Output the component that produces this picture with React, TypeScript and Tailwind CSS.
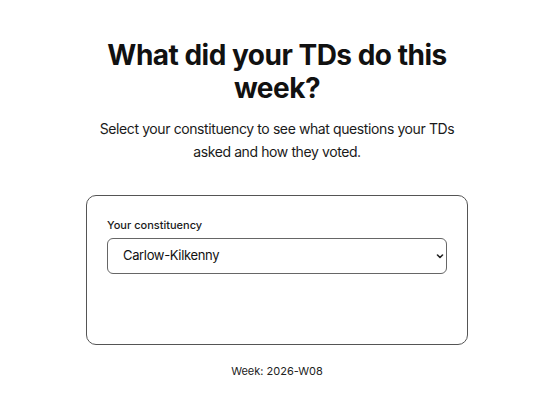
import React from 'react';

export default function App() {
  return (
    <div className="flex min-h-screen justify-center bg-white pr-[6px] pt-[39px] font-['Inter',sans-serif] text-[#111]">
      <div className="w-[382px] text-center">
        <h1 className="text-[28px] font-bold leading-[33px] tracking-[-0.5px]">
          What did your TDs do this week?
        </h1>
        <p className="mt-3 text-[14px] leading-[23px] tracking-[-0.4px] text-[#1a1a1a]">
          Select your constituency to see what questions your TDs asked and how they voted.
        </p>

        <div className="mt-8 h-[150px] rounded-[10px] border border-[#555] px-5 pt-5 text-left">
          <label className="block text-[11px] font-medium leading-[18px] text-[#1a1a1a]">
            Your constituency
          </label>
          <div className="relative mt-1">
            <select
              defaultValue="carlow-kilkenny"
              className="h-9 w-full appearance-none rounded-md border border-[#666] bg-white pl-[15px] pr-8 text-[13px] tracking-[-0.35px] text-[#111] outline-none"
            >
              <option value="carlow-kilkenny">Carlow-Kilkenny</option>
            </select>
            <svg
              className="pointer-events-none absolute right-[3px] top-1/2 h-[8px] w-[8px] -translate-y-1/2"
              viewBox="0 0 8 8"
              fill="none"
              stroke="#222"
              strokeWidth="1.6"
              strokeLinecap="round"
              strokeLinejoin="round"
            >
              <path d="M1.5 3l2.5 2.5L6.5 3" />
            </svg>
          </div>
        </div>

        <p className="mt-4 text-[11px] leading-5 text-[#222]">Week: 2026-W08</p>
      </div>
    </div>
  );
}
